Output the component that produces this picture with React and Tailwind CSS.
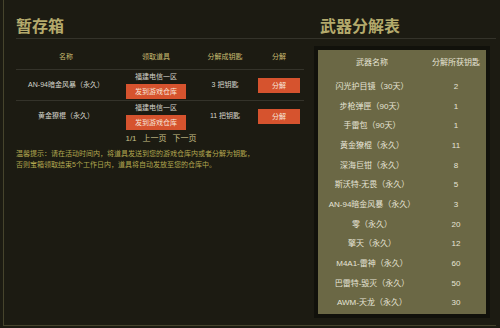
import React from 'react';

const stash = [
  { name: 'AN-94暗金风暴（永久）', server: '福建电信一区', keys: '3 把钥匙' },
  { name: '黄金獠棍（永久）', server: '福建电信一区', keys: '11 把钥匙' },
];

const table = [
  ['闪光护目镜（30天）', '2'],
  ['步枪弹匣（90天）', '1'],
  ['手雷包（90天）', '1'],
  ['黄金獠棍（永久）', '11'],
  ['深海巨钳（永久）', '8'],
  ['斯沃特-无畏（永久）', '5'],
  ['AN-94暗金风暴（永久）', '3'],
  ['零（永久）', '20'],
  ['擎天（永久）', '12'],
  ['M4A1-雷神（永久）', '60'],
  ['巴雷特-毁灭（永久）', '50'],
  ['AWM-天龙（永久）', '30'],
];

const RedButton = ({ children, className = '' }) => (
  <button className={`flex items-center justify-center h-[15px] bg-[#d6532e] text-[#f6e6da] text-[7px] leading-none ${className}`}>
    {children}
  </button>
);

export default function App() {
  return (
    <div className="w-[500px] h-[328px] bg-[#1c1b12] pl-[3px] pb-[2px] pr-[4px] overflow-hidden font-[family-name:'Liberation_Sans','Noto_Sans_CJK_SC',sans-serif]">
      <div className="h-full flex border-l border-b border-[#46442c]">
        {/* Left: stash */}
        <div className="w-[310px] pl-[12px]">
          <div className="h-[39px] pt-[18px] border-b border-[#34332a]">
            <h1 className="text-[16px] leading-[17px] font-bold text-[#b4aa6c]">暂存箱</h1>
          </div>
          <div className="w-[288px]">
            <div className="flex h-[31px] pt-[7px] items-center border-b border-[#34332a] text-[7px] text-[#c9bb70]">
              <div className="w-[100px] text-center">名称</div>
              <div className="w-[80px] text-center">领取道具</div>
              <div className="w-[58px] text-center">分解成钥匙</div>
              <div className="w-[50px] text-center">分解</div>
            </div>
            {stash.map((row, i) => (
              <div
                key={row.name}
                className={`flex h-[31px] items-center text-[7px] text-[#d6d5cc] ${i === 0 ? 'border-b border-[#34332a]' : ''}`}
              >
                <div className="w-[100px] text-center">{row.name}</div>
                <div className="w-[80px] flex flex-col items-center self-start pt-[1px]">
                  <div className="h-[11px] leading-[11px]">{row.server}</div>
                  <RedButton className="w-[60px] mt-[2px]">发到游戏仓库</RedButton>
                </div>
                <div className="w-[58px] text-center">{row.keys}</div>
                <div className="w-[50px] flex justify-center">
                  <RedButton className="w-[42px]">分解</RedButton>
                </div>
              </div>
            ))}
            <div className="flex justify-center gap-[6px] pt-[1px] pl-[2px] text-[8px] leading-[12px] text-[#c8c08a]">
              <span>1/1</span>
              <span>上一页</span>
              <span>下一页</span>
            </div>
          </div>
          <div className="mt-[3px] text-[7px] leading-[11px] text-[#b3a850]">
            <p>温馨提示：请在活动时间内，将道具发送到您的游戏仓库内或者分解为钥匙，</p>
            <p>否则宝箱领取结束5个工作日内，道具将自动发放至您的仓库中。</p>
          </div>
        </div>

        {/* Right: decompose table */}
        <div className="flex-1">
          <div className="h-[39px] pt-[18px] pl-[6px] border-b border-[#34332a]">
            <h1 className="text-[16px] leading-[17px] font-bold text-[#b4aa6c]">武器分解表</h1>
          </div>
          <div className="mt-[7px] w-[176px] h-[272px] border-4 border-[#11110b] bg-[#6b6845] pt-[3px] text-[8px] text-[#e6e4d6]">
            <div className="flex h-[20px] items-center mb-[4px]">
              <div className="w-[108px] text-center">武器名称</div>
              <div className="flex-1 text-center">分解所获钥匙</div>
            </div>
            {table.map(([name, keys]) => (
              <div key={name} className="flex h-[19.7px] items-center">
                <div className="w-[108px] text-center">{name}</div>
                <div className="flex-1 text-center">{keys}</div>
              </div>
            ))}
          </div>
        </div>
      </div>
    </div>
  );
}
